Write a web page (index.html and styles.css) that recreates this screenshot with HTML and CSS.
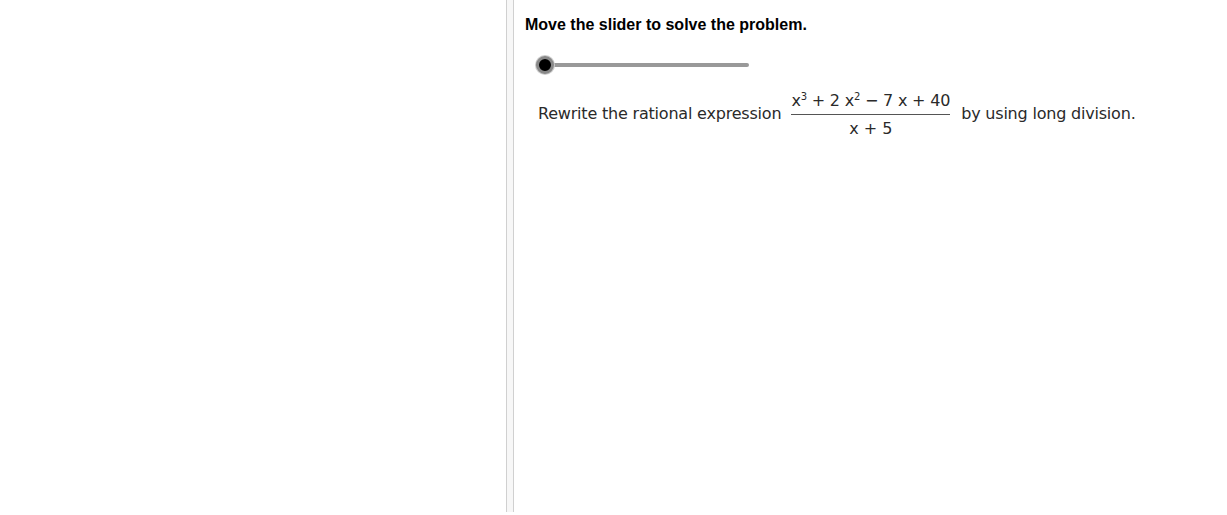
FILE: index.html
```html
<!DOCTYPE html>
<html>
<head>
<meta charset="utf-8">
<link rel="stylesheet" href="styles.css">
</head>
<body>
<div class="app">
  <div class="left"></div>
  <div class="divider"></div>
  <div class="right">
    <div class="title">Move the slider to solve the problem.</div>
    <div class="slider">
      <div class="track"></div>
      <div class="knob"></div>
    </div>
    <div class="problem">
      <span class="txt">Rewrite the rational expression</span>
      <span class="frac">
        <span class="num">x<sup>3</sup> + 2 x<sup>2</sup> − 7 x + 40</span>
        <span class="den">x + 5</span>
      </span>
      <span class="txt">by using long division.</span>
    </div>
  </div>
</div>
</body>
</html>
```
FILE: styles.css
```css
html, body { margin: 0; padding: 0; background: #fff; }
.app { display: flex; width: 1227px; height: 515px; }
.left { width: 506px; height: 513px; }
.divider {
  width: 6px; height: 512px;
  background: #f7f7f7;
  border-left: 1px solid #d0d0d0;
  border-right: 1px solid #d0d0d0;
}
.right { flex: 1; padding-left: 11px; }
.title {
  font-family: "Liberation Sans", Arial, sans-serif;
  font-weight: bold; font-size: 16px; color: #000;
  margin-top: 16px; line-height: 18px;
}
.slider { position: relative; margin: 23px 0 0 20px; width: 204px; height: 16px; }
.track { position: absolute; left: 0; right: 0; top: 6px; height: 4px; background: #999; border-radius: 2px; }
.knob {
  position: absolute; left: -9px; top: -1px; width: 12px; height: 12px;
  background: #000; border-radius: 50%;
  border: 3px solid #888;
  box-shadow: 0 0 0 1px #ccc;
}
.problem {
  display: flex; align-items: center; margin: 18px 0 0 13px;
  font-family: "DejaVu Sans", sans-serif; font-size: 16px; color: #2a2a2a;
}
.txt { letter-spacing: -0.2px; line-height: 20px; margin-bottom: 3px; }
.frac { display: inline-flex; flex-direction: column; align-items: center; margin: 0 11px 0 10px; }
.num { border-bottom: 1px solid #555; padding: 0 0 3px; line-height: 20px; letter-spacing: -0.2px; }
.den { line-height: 20px; padding-top: 4px; }
sup { font-size: 10px; vertical-align: 6px; line-height: 0; }
```
